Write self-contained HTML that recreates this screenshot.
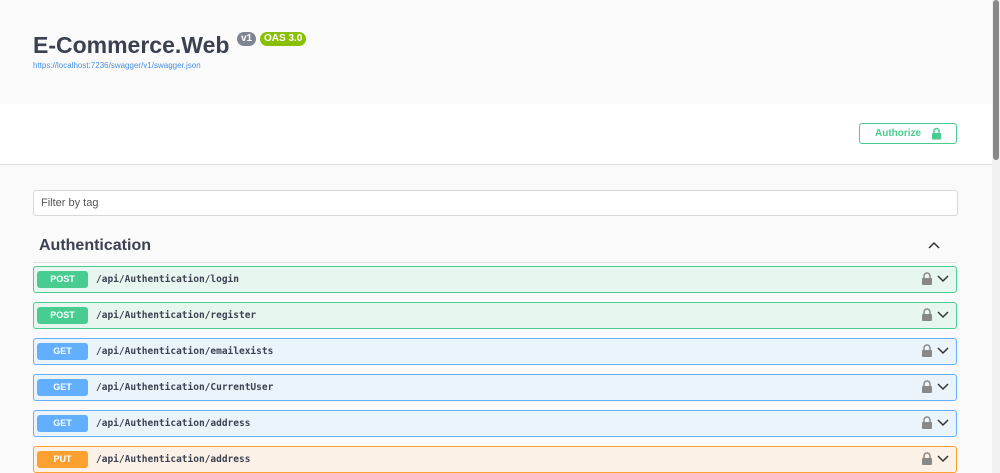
<!DOCTYPE html>
<html><head><style>
body{margin:0;width:1000px;height:473px;overflow:hidden;background:#fafafa;font-family:"Liberation Sans",sans-serif;position:relative}
.hdr{position:absolute;left:0;top:0;width:992px;height:104px;background:#fafafa}
.title{position:absolute;left:33px;top:32px;font-size:23px;font-weight:bold;color:#3b4151}
.v1{position:absolute;left:237px;top:32px;background:#7d8492;color:#fff;font-size:10px;font-weight:bold;border-radius:7px;padding:2px 4px;height:10px;line-height:10px}
.oas{position:absolute;left:260px;top:32px;background:#89bf04;color:#fff;font-size:10px;font-weight:bold;border-radius:7px;padding:2px 4px;height:10px;line-height:10px}
.url{position:absolute;left:33px;top:61px;font-size:8px;color:#4990e2}
.band{position:absolute;left:0;top:104px;width:992px;height:60px;background:#fff;border-bottom:1px solid #ddd}
.auth{position:absolute;left:859px;top:123px;width:96px;height:19px;border:1px solid #49cc90;border-radius:3px;color:#49cc90;font-size:10px;font-weight:bold;line-height:19px;background:#fff}
.filter{position:absolute;left:33px;top:190px;width:916px;height:24px;border:1px solid #d9d9d9;border-radius:3px;background:#fff;font-size:11px;color:#555;line-height:24px;padding-left:7px}
.tag{position:absolute;left:39px;top:237px;font-size:16px;font-weight:bold;color:#3b4151}
.tagline{position:absolute;left:33px;top:262px;width:924px;height:1px;background:#e0e0e0}
.row{position:absolute;left:33px;width:922px;height:25px;border:1px solid;border-radius:3px}
.b{position:absolute;left:3px;top:4px;width:51px;height:17px;border-radius:3px;color:#fff;font-size:9px;font-weight:bold;text-align:center;line-height:17px}
.p{position:absolute;left:62px;top:0;line-height:25px;font-family:"DejaVu Sans Mono","Liberation Mono",monospace;font-size:9.5px;font-weight:bold;color:#3b4151}
.post{background:#e8f6f0;border-color:#49cc90}.post .b{background:#49cc90}
.get{background:#ebf3fb;border-color:#61affe}.get .b{background:#61affe}
.put{background:#fbf1e6;border-color:#fca130}.put .b{background:#fca130}
.ic{position:absolute;right:1px;top:4px}
.sb{position:absolute;left:992px;top:0;width:8px;height:473px;background:#f1f1f1}
.th{position:absolute;left:993px;top:0;width:6px;height:160px;background:#888;border-radius:3px}
</style></head><body>
<div class="hdr"></div>
<div class="title">E-Commerce.Web</div>
<div class="v1">v1</div><div class="oas">OAS 3.0</div>
<div class="url">https://localhost:7236/swagger/v1/swagger.json</div>
<div class="band"></div>
<div class="auth"><span style="position:absolute;left:15px">Authorize</span>
<svg style="position:absolute;left:71px;top:3px" width="11" height="13" viewBox="0 0 11 13"><path d="M3 6V4a2.5 2.5 0 0 1 5 0v2" fill="none" stroke="#49cc90" stroke-width="1.5"/><rect x="1" y="6" width="9" height="6.5" rx="1" fill="#49cc90"/></svg></div>
<div class="filter">Filter by tag</div>
<div class="tag">Authentication</div>
<svg style="position:absolute;left:927px;top:240px" width="14" height="10" viewBox="0 0 14 10"><path d="M2 8l5-5 5 5" fill="none" stroke="#333" stroke-width="1.5"/></svg>
<div class="tagline"></div>
<div class="row post" style="top:266px"><div class="b">POST</div><div class="p">/api/Authentication/login</div><svg class="ic" width="34" height="15" viewBox="0 0 34 15"><path d="M3 7V5a3 3 0 0 1 6 0v2" fill="none" stroke="#888" stroke-width="1.5"/><rect x="1" y="7" width="10" height="7" rx="1" fill="#888"/><path d="M17 5l5 5 5-5" fill="none" stroke="#333" stroke-width="1.5"/></svg></div>
<div class="row post" style="top:302px"><div class="b">POST</div><div class="p">/api/Authentication/register</div><svg class="ic" width="34" height="15" viewBox="0 0 34 15"><path d="M3 7V5a3 3 0 0 1 6 0v2" fill="none" stroke="#888" stroke-width="1.5"/><rect x="1" y="7" width="10" height="7" rx="1" fill="#888"/><path d="M17 5l5 5 5-5" fill="none" stroke="#333" stroke-width="1.5"/></svg></div>
<div class="row get" style="top:338px"><div class="b">GET</div><div class="p">/api/Authentication/emailexists</div><svg class="ic" width="34" height="15" viewBox="0 0 34 15"><path d="M3 7V5a3 3 0 0 1 6 0v2" fill="none" stroke="#888" stroke-width="1.5"/><rect x="1" y="7" width="10" height="7" rx="1" fill="#888"/><path d="M17 5l5 5 5-5" fill="none" stroke="#333" stroke-width="1.5"/></svg></div>
<div class="row get" style="top:374px"><div class="b">GET</div><div class="p">/api/Authentication/CurrentUser</div><svg class="ic" width="34" height="15" viewBox="0 0 34 15"><path d="M3 7V5a3 3 0 0 1 6 0v2" fill="none" stroke="#888" stroke-width="1.5"/><rect x="1" y="7" width="10" height="7" rx="1" fill="#888"/><path d="M17 5l5 5 5-5" fill="none" stroke="#333" stroke-width="1.5"/></svg></div>
<div class="row get" style="top:410px"><div class="b">GET</div><div class="p">/api/Authentication/address</div><svg class="ic" width="34" height="15" viewBox="0 0 34 15"><path d="M3 7V5a3 3 0 0 1 6 0v2" fill="none" stroke="#888" stroke-width="1.5"/><rect x="1" y="7" width="10" height="7" rx="1" fill="#888"/><path d="M17 5l5 5 5-5" fill="none" stroke="#333" stroke-width="1.5"/></svg></div>
<div class="row put" style="top:446px"><div class="b">PUT</div><div class="p">/api/Authentication/address</div><svg class="ic" width="34" height="15" viewBox="0 0 34 15"><path d="M3 7V5a3 3 0 0 1 6 0v2" fill="none" stroke="#888" stroke-width="1.5"/><rect x="1" y="7" width="10" height="7" rx="1" fill="#888"/><path d="M17 5l5 5 5-5" fill="none" stroke="#333" stroke-width="1.5"/></svg></div>
<div class="sb"></div><div class="th"></div>
</body></html>
